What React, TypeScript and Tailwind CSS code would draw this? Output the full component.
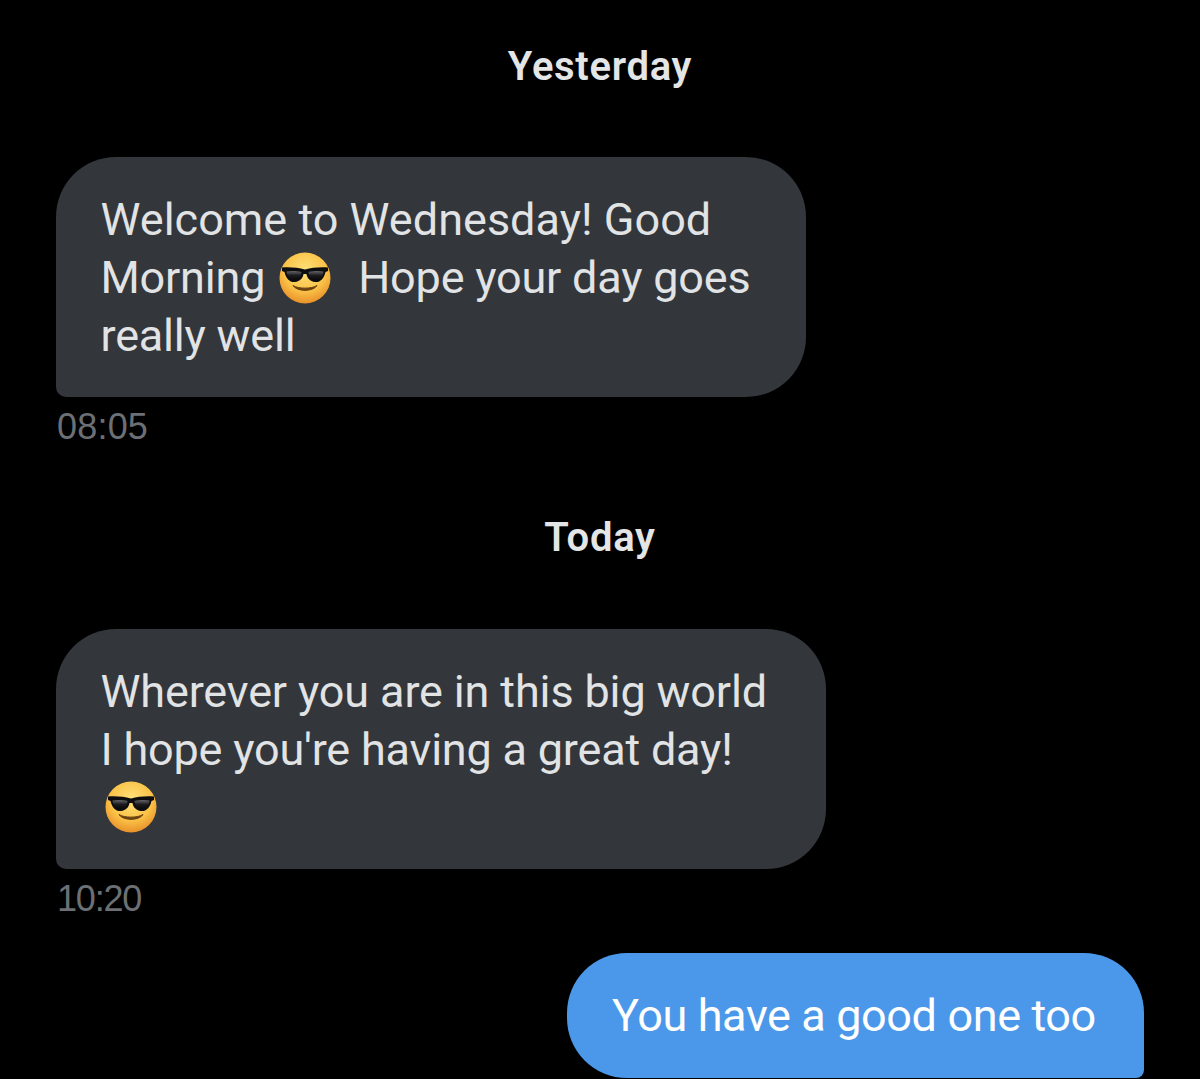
function CoolEmoji({ className }: { className: string }) {
  return (
    <svg viewBox="0 0 52 52" className={className}>
      <defs>
        <radialGradient id="face" cx="50%" cy="35%" r="65%">
          <stop offset="0%" stopColor="#ffe17a" />
          <stop offset="62%" stopColor="#fbc348" />
          <stop offset="100%" stopColor="#e8912a" />
        </radialGradient>
        <linearGradient id="lens" x1="0" y1="0" x2="0" y2="1">
          <stop offset="0%" stopColor="#66666a" />
          <stop offset="50%" stopColor="#1b1b1e" />
          <stop offset="100%" stopColor="#09090b" />
        </linearGradient>
      </defs>
      <circle cx="26" cy="26" r="25.5" fill="url(#face)" />
      <path d="M3 15.500 C11 15 19 15.500 26 17.500 C33 15.500 41 15 49 15.500 L49 19 L46.500 20 C45 27 41 30.500 36 30 C31 29.500 28 26 27.500 22 L24.500 22 C24 26 21 29.500 16 30 C11 30.500 7 27 5.500 20 L3 19 Z" fill="#0d0d10" />
      <path d="M7.500 19.500 C12 18.500 18 19 22.500 20 C22 25 19.500 28 15.500 28 C11 28 8 24.500 7.500 19.500 Z" fill="url(#lens)" />
      <path d="M44.500 19.500 C40 18.500 34 19 29.500 20 C30 25 32.500 28 36.500 28 C41 28 44 24.500 44.500 19.500 Z" fill="url(#lens)" />
      <path d="M14 33.500 C18 40 34 40 38 33.500 C33 37 19 37 14 33.500 Z" fill="#6a420f" stroke="#6a420f" strokeWidth="1" strokeLinejoin="round" />
    </svg>
  );
}

function DayLabel({ children, className }: { children: string; className: string }) {
  return <div className={`text-center text-[40px] leading-[44px] font-semibold tracking-[0.7px] text-[#e3e5e6] ${className}`}>{children}</div>;
}

function Time({ children, className }: { children: string; className: string }) {
  return <div className={`mt-[11px] ml-px font-['Liberation_Sans',sans-serif] text-[36px] leading-[38px] text-[#6c7075] ${className}`}>{children}</div>;
}

const incoming = "rounded-[60px] rounded-bl-[10px] bg-[#33363a] pt-[34px] pb-[32px] pl-[44.5px] text-[45px] leading-[58px] text-[#e1e3e5]";

export default function App() {
  return (
    <div className="h-[1079px] overflow-hidden bg-black pt-[45px] font-['Roboto',sans-serif]">
      <DayLabel className="mb-[68px]">Yesterday</DayLabel>

      <div className="pl-[56px]">
        <div className={`${incoming} w-[750px]`}>
          <div className="tracking-[0.02px]">Welcome to Wednesday! Good</div>
          <div className="flex items-center tracking-[-0.2px]">
            Morning
            <CoolEmoji className="mx-[14px] h-[52px] w-[52px]" />
            <span className="ml-[13px]">Hope your day goes</span>
          </div>
          <div className="tracking-[-0.2px]">really well</div>
        </div>
        <Time className="tracking-[0.2px]">08:05</Time>
      </div>

      <DayLabel className="mt-[70px] mb-[69px]">Today</DayLabel>

      <div className="pl-[56px]">
        <div className={`${incoming} w-[770px]`}>
          <div className="tracking-[-0.14px]">Wherever you are in this big world</div>
          <div className="tracking-[-0.2px]">I hope you're having a great day!</div>
          <CoolEmoji className="mt-[2px] mb-[4px] ml-[4px] h-[52px] w-[52px]" />
        </div>
        <Time className="tracking-[-1.2px]">10:20</Time>
      </div>

      <div className="mt-[35px] flex justify-end pr-[56px]">
        <div className="flex h-[125px] w-[577px] items-center rounded-[60px] rounded-br-[8px] bg-[#4b98ea] pl-[45px] text-[45px] leading-[58px] tracking-[-0.38px] text-white">
          You have a good one too
        </div>
      </div>
    </div>
  );
}
